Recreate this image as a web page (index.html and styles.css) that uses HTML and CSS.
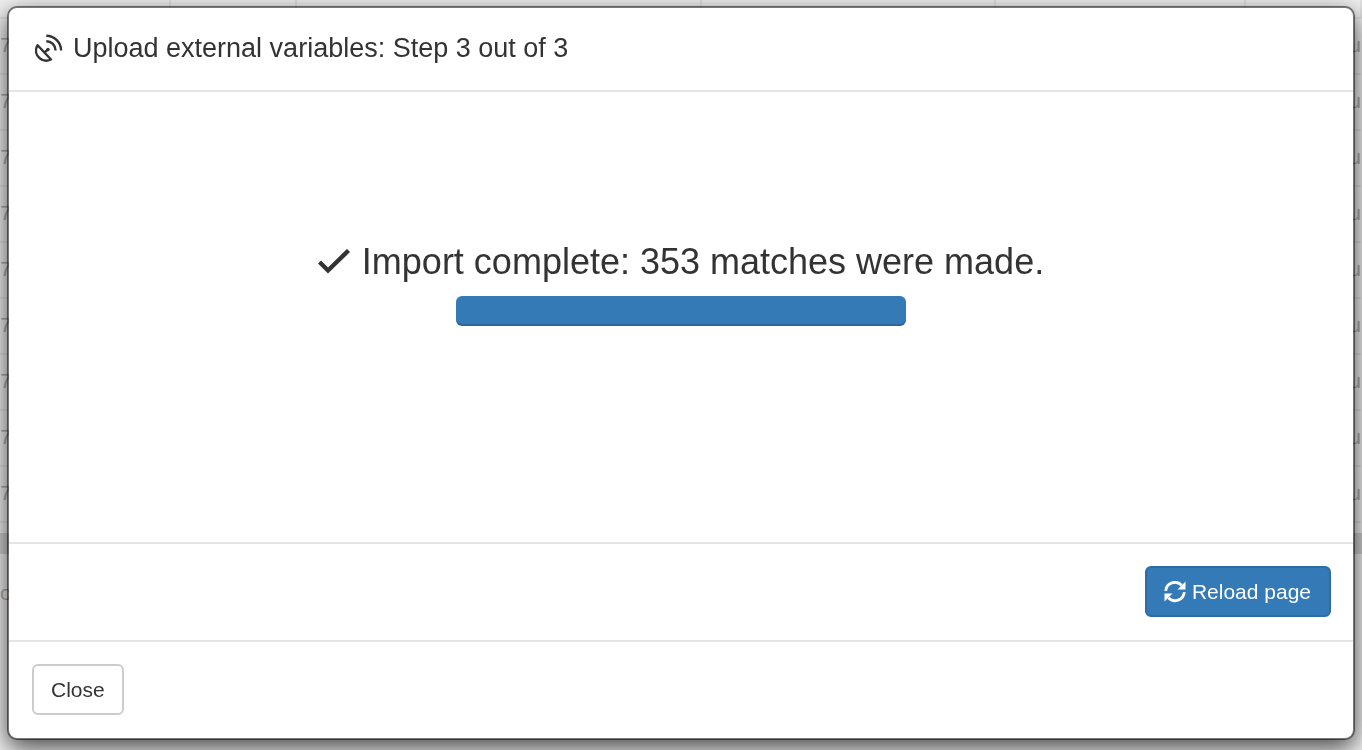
FILE: index.html
```
<!DOCTYPE html>
<html lang="en">
<head>
  <meta charset="UTF-8">
  <title>Upload external variables</title>
  <link rel="stylesheet" href="styles.css">
</head>
<body>

  <!-- Results table behind the modal -->
  <div class="page">
    <table class="results">
      <colgroup>
        <col class="col-id">
        <col class="col-code">
        <col class="col-name">
        <col class="col-type">
        <col class="col-date">
        <col>
      </colgroup>
      <tbody>
        <tr class="results-head"><td></td><td></td><td></td><td></td><td></td><td></td></tr>
        <tr><td>7</td><td></td><td></td><td></td><td></td><td class="last">u</td></tr>
        <tr><td>7</td><td></td><td></td><td></td><td></td><td class="last">u</td></tr>
        <tr><td>7</td><td></td><td></td><td></td><td></td><td class="last">u</td></tr>
        <tr><td>7</td><td></td><td></td><td></td><td></td><td class="last">u</td></tr>
        <tr><td>7</td><td></td><td></td><td></td><td></td><td class="last">u</td></tr>
        <tr><td>7</td><td></td><td></td><td></td><td></td><td class="last">u</td></tr>
        <tr><td>7</td><td></td><td></td><td></td><td></td><td class="last">u</td></tr>
        <tr><td>7</td><td></td><td></td><td></td><td></td><td class="last">u</td></tr>
        <tr><td>7</td><td></td><td></td><td></td><td></td><td class="last">u</td></tr>
      </tbody>
    </table>
    <div class="scrollbar"></div>
    <div class="page-footer">of</div>
  </div>

  <!-- Modal -->
  <div class="modal">
    <div class="modal-content" role="dialog" aria-labelledby="modalTitle">
      <div class="modal-header">
        <h4 class="modal-title" id="modalTitle">
          <svg class="icon-dish" viewBox="0 0 28 28" aria-hidden="true">
            <path d="M2.600 11.200C-.3 16.500 1.200 21.500 4.700 24.300c3.300 2.700 7.800 2.900 11.300 1.200zM9.300 18.600l4-3.300" fill="none" stroke="currentColor" stroke-width="2.400" stroke-linejoin="round"/>
            <circle cx="13" cy="15.500" r="1.700" fill="currentColor"/>
            <path d="M11.300 7.200A9.300 9.300 0 0 1 20.600 16.500M11.300 1.700A14.800 14.800 0 0 1 26.100 16.500" fill="none" stroke="currentColor" stroke-width="2.400"/>
          </svg>
          Upload external variables: Step 3 out of 3
        </h4>
      </div>

      <div class="modal-body">
        <h2 class="result">
          <svg class="icon-ok" viewBox="0 0 32 26" aria-hidden="true">
            <path d="M1.500 13l8.500 8.500L30.500 1.500" fill="none" stroke="currentColor" stroke-width="4.400"/>
          </svg>
          Import complete: 353 matches were made.
        </h2>
        <div class="progress" role="progressbar" aria-label="Import progress" aria-valuemin="0" aria-valuemax="100" aria-valuenow="100"></div>
      </div>

      <div class="modal-footer">
        <button type="button" class="btn btn-primary">
          <svg class="icon-refresh" viewBox="0 0 22 22" aria-hidden="true">
            <path d="M1.700 9.800A9.200 9.200 0 0 1 17.600 4.300M20.300 11.200A9.200 9.200 0 0 1 4.400 16.700" fill="none" stroke="currentColor" stroke-width="2.800"/>
            <path d="M21.500.500v8h-8zM.500 20.500v-8h8z" fill="currentColor"/>
          </svg>
          Reload page
        </button>
      </div>

      <div class="modal-footer left">
        <button type="button" class="btn btn-default">Close</button>
      </div>
    </div>
  </div>

</body>
</html>
```
FILE: styles.css
```
* {
  box-sizing: border-box;
}
body {
  margin: 0;
  font-family: "Liberation Sans", Arial, sans-serif;
  font-size: 21px;
  line-height: 30px;
  color: #333;
  background: #f0f0f0;
}

/* Page behind the modal */
.page {
  height: 100vh;
  overflow: hidden;
  color: #aaa;
}
.results {
  width: 100%;
  table-layout: fixed;
  border-collapse: collapse;
}
.results td {
  height: 56px;
  padding: 0 0 2px;
  border-bottom: 2px solid #e2e2e2;
}
.results .results-head td {
  height: 18px;
  border-right: 2px solid #e2e2e2;
}
.results .last {
  text-align: right;
}
.col-id {
  width: 12.5%;
}
.col-code {
  width: 9.25%;
}
.col-name {
  width: 29.75%;
}
.col-type {
  width: 21.6%;
}
.col-date {
  width: 18.4%;
}
.scrollbar {
  height: 21px;
  margin-top: 10px;
  background: #d0d0d0;
}
.page-footer {
  padding-top: 24px;
}

/* Modal */
.modal {
  position: fixed;
  inset: 0;
  padding: 6px 7px;
  overflow: hidden;
}
.modal-content {
  background: #fff;
  background-clip: padding-box;
  border: 2px solid rgba(0, 0, 0, 0.5);
  border-radius: 10px;
  box-shadow: 0 8px 24px rgba(0, 0, 0, 0.7);
}
.modal-header {
  padding: 23px 26px 25px;
  border-bottom: 2px solid #e5e5e5;
}
.modal-title {
  display: flex;
  align-items: center;
  gap: 10px;
  margin: 0;
  font-size: 27px;
  line-height: 34px;
  font-weight: 400;
}
.modal-body {
  display: flex;
  flex-direction: column;
  align-items: center;
  min-height: 450px;
  padding: 150px 24px 24px;
}
.result {
  display: flex;
  align-items: center;
  gap: 12px;
  margin: 0 0 14px;
  font-size: 36px;
  line-height: 40px;
  font-weight: 400;
}
.progress {
  width: 450px;
  max-width: 100%;
  height: 30px;
  background: #337ab7;
  border-radius: 6px;
  box-shadow: inset 0 -2px 0 rgba(0, 0, 0, 0.15);
}
.modal-footer {
  display: flex;
  justify-content: flex-end;
  padding: 22px 22px 23px;
  border-top: 2px solid #e5e5e5;
}
.modal-footer.left {
  justify-content: flex-start;
  padding-left: 23px;
}

/* Buttons */
.btn {
  display: flex;
  align-items: center;
  gap: 6px;
  padding: 8px 17px;
  border: 2px solid transparent;
  border-radius: 6px;
  font-family: inherit;
  font-size: 21px;
  line-height: 31px;
  cursor: pointer;
}
.btn-primary {
  padding-right: 18px;
  color: #fff;
  background: #337ab7;
  border-color: #2e6da4;
}
.btn-default {
  color: #333;
  background: #fff;
  border-color: #ccc;
}

/* Icons */
.icon-dish {
  width: 28px;
  height: 28px;
}
.icon-ok {
  width: 32px;
  height: 26px;
}
.icon-refresh {
  width: 22px;
  height: 22px;
}
```
